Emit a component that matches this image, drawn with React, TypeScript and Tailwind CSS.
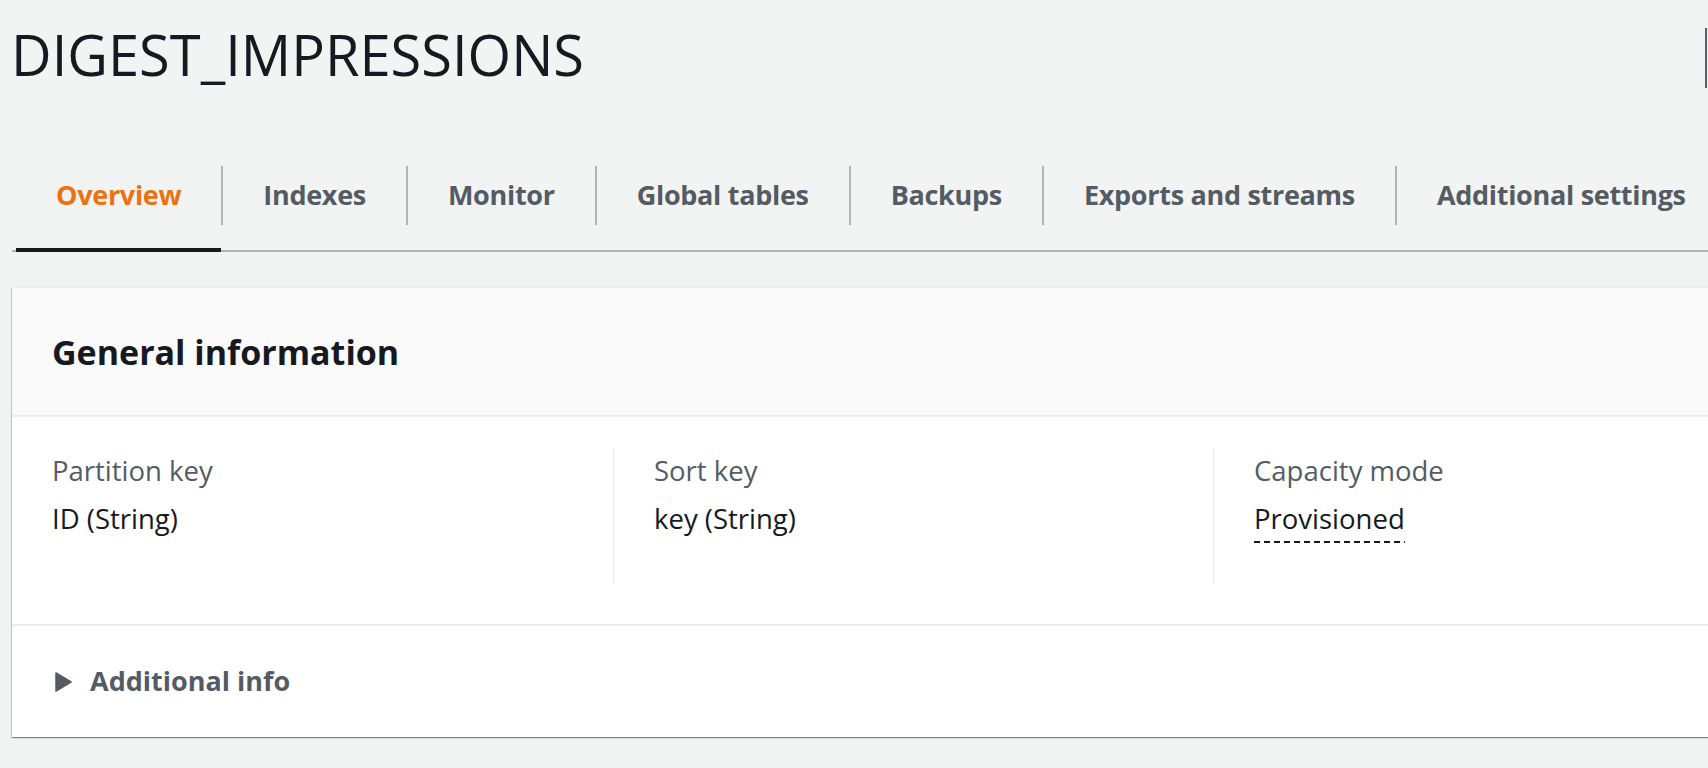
import { useState } from "react";

const tabs = [
  "Overview",
  "Indexes",
  "Monitor",
  "Global tables",
  "Backups",
  "Exports and streams",
  "Additional settings",
];

const details = [
  { label: "Partition key", value: "ID (String)" },
  { label: "Sort key", value: "key (String)" },
  { label: "Capacity mode", value: "Provisioned", dashed: true },
];

export default function App() {
  const [active, setActive] = useState(0);

  return (
    <div className="h-[768px] w-full overflow-hidden bg-[#f2f3f3] font-['Open_Sans',sans-serif] text-[#16191f]">
      <div className="w-[1900px] pl-[12px]">
        {/* HEADER */}
        <div className="flex items-start">
          <h1 className="mt-[22px] w-[1694px] text-[56px] font-normal leading-[64px] -ml-[1px]">
            DIGEST_IMPRESSIONS
          </h1>
          <div className="mt-[28px] h-[60px] w-[40px] border-l-2 border-[#545b64]" />
        </div>

        {/* TABS */}
        <div className="mt-[54px] flex border-b-2 border-[#aab7b8] pl-[4px]">
          {tabs.map((t, i) => (
            <button
              key={t}
              onClick={() => setActive(i)}
              className={
                "-mb-[2px] shrink-0 pt-[24px] pb-[23px] border-b-4 " +
                (i === active ? "border-[#16191f]" : "border-transparent")
              }
            >
              <span
                className={
                  "flex h-[59px] items-center whitespace-nowrap px-[40px] text-[27px] font-bold tracking-[-0.3px] " +
                  (i === 0 ? "" : "border-l-2 border-[#aab7b8] ") +
                  (i === active ? "text-[#ec7211]" : "text-[#545b64]")
                }
              >
                {t}
              </span>
            </button>
          ))}
        </div>

        {/* GENERAL INFORMATION CARD */}
        <div className="mt-[35px] w-[1850px] border-t border-[#eaeded] bg-white shadow-[0_1px_1px_0_rgba(0,28,36,0.3),1px_1px_1px_0_rgba(0,28,36,0.15),-1px_1px_1px_0_rgba(0,28,36,0.15)]">
          <div className="flex h-[129px] items-center border-b-2 border-[#eaeded] bg-[#fafafa] pl-[40px]">
            <h2 className="text-[34px] font-bold leading-[40px]">General information</h2>
          </div>

          <div className="flex border-b-2 border-[#eaeded] pt-[32px] pb-[40px]">
            {details.map((d, i) => (
              <div
                key={d.label}
                className={
                  "h-[135px] w-[600px] px-[40px] pt-[2px] " +
                  (i === 0 ? "w-[601px]" : "border-l border-[#eaeded]")
                }
              >
                <div className="text-[27.5px] leading-[40px] text-[#545b64]">{d.label}</div>
                <div className="mt-[8px] text-[27.5px] leading-[40px]">
                  {d.dashed ? (
                    <span className="bg-[repeating-linear-gradient(90deg,#16191f_0_6px,transparent_6px_10px)] bg-[length:100%_2px] bg-bottom bg-no-repeat pb-[6px]">
                      {d.value}
                    </span>
                  ) : (
                    d.value
                  )}
                </div>
              </div>
            ))}
          </div>

          <div className="flex h-[111px] items-center pl-[43px]">
            <svg width="17" height="20" viewBox="0 0 17 20" className="shrink-0">
              <path d="M1 1 L16 10 L1 19 Z" fill="#545b64" stroke="#545b64" strokeWidth="1.5" strokeLinejoin="round" />
            </svg>
            <span className="ml-[18px] text-[27px] font-bold text-[#545b64]">Additional info</span>
          </div>
        </div>
      </div>
    </div>
  );
}
